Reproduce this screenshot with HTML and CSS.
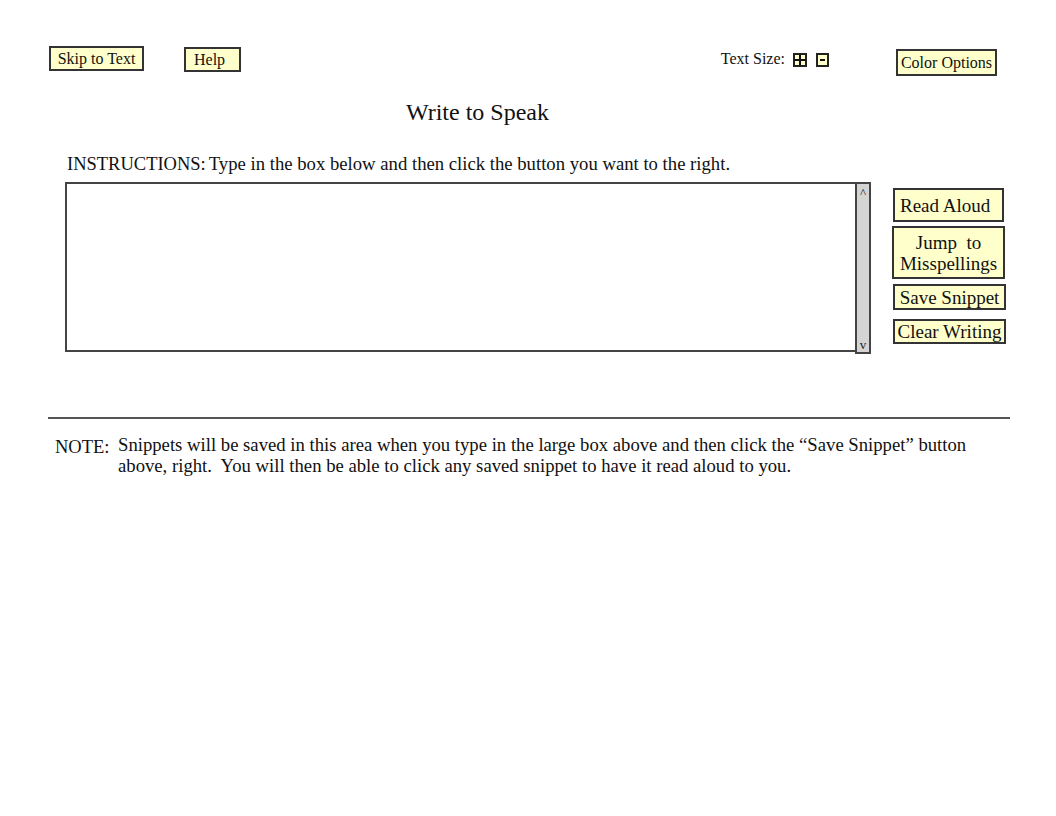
FILE: index.html
```html
<!DOCTYPE html>
<html lang="en">
<head>
<meta charset="utf-8">
<title>Write to Speak</title>
<link rel="stylesheet" href="styles.css">
</head>
<body>
<div class="page">
  <header class="topbar">
    <button class="btn btn-skip">Skip to Text</button>
    <button class="btn btn-help">Help</button>
    <div class="textsize">
      <span class="textsize-label">Text Size:</span>
      <span class="size-btn size-plus" aria-label="Increase text size">
        <svg width="14" height="14" viewBox="0 0 14 14"><rect x="1" y="1" width="12" height="12" fill="#ffffcc" stroke="#222" stroke-width="2"/><path d="M7 1.5V12.5M1.5 7H12.5" stroke="#111" stroke-width="2"/></svg>
      </span>
      <span class="size-btn size-minus" aria-label="Decrease text size">
        <svg width="13" height="14" viewBox="0 0 13 14"><rect x="1" y="1" width="11" height="12" fill="#ffffcc" stroke="#222" stroke-width="2"/><path d="M4 7H9" stroke="#111" stroke-width="2"/></svg>
      </span>
    </div>
    <button class="btn btn-color">Color Options</button>
  </header>

  <h1 class="title">Write to Speak</h1>

  <p class="instructions"><span class="instr-label">INSTRUCTIONS:</span>Type in the box below and then click the button you want to the right.</p>

  <section class="workarea">
    <div class="editor">
      <div class="textbox"></div>
      <div class="scrollbar"><span class="arrow-up">^</span><span class="arrow-down">v</span></div>
    </div>
    <div class="actions">
      <button class="btn act act-read">Read Aloud</button>
      <button class="btn act act-jump">Jump&nbsp; to<br>Misspellings</button>
      <button class="btn act act-save">Save Snippet</button>
      <button class="btn act act-clear">Clear Writing</button>
    </div>
  </section>

  <hr class="divider">

  <div class="note">
    <span class="note-label">NOTE:</span>
    <p class="note-text">Snippets will be saved in this area when you type in the large box above and then click the “Save Snippet” button above, right.&nbsp; You will then be able to click any saved snippet to have it read aloud to you.</p>
  </div>
</div>
</body>
</html>
```

FILE: styles.css
```css
html, body {
  margin: 0;
  padding: 0;
  background: #ffffff;
}

body {
  font-family: "Liberation Serif", "Times New Roman", serif;
  color: #111;
}

.page {
  width: 1056px;
  min-height: 816px;
}

.btn {
  font-family: "Liberation Serif", "Times New Roman", serif;
  background: #ffffcc;
  border: 2px solid #333;
  color: #111;
  padding: 0;
  margin: 0;
  cursor: pointer;
  box-sizing: border-box;
}

/* top bar */
.topbar {
  display: flex;
  align-items: flex-start;
  padding: 46px 59px 0 49px;
  height: 76px;
  box-sizing: border-box;
}

.btn-skip {
  width: 95px;
  height: 25px;
  font-size: 16px;
}

.btn-help {
  width: 57px;
  height: 25px;
  font-size: 16px;
  margin-top: 1px;
  margin-left: 40px;
  text-align: left;
  padding-left: 8px;
}

.textsize {
  margin-left: auto;
  display: flex;
  align-items: center;
  margin-top: 4px;
}

.textsize-label {
  font-size: 16px;
  margin-right: 8px;
}

.size-btn {
  display: flex;
  line-height: 0;
}

.size-plus {
  margin-top: 2px;
}

.size-minus {
  margin-left: 9px;
  margin-top: 2px;
}

.btn-color {
  width: 101px;
  height: 27px;
  font-size: 16px;
  margin-left: 67px;
  margin-top: 3px;
}

/* title */
.title {
  margin: 22px 0 0 406px;
  font-size: 24px;
  font-weight: normal;
  line-height: 28px;
}

/* instructions */
.instructions {
  margin: 27px 0 0 67px;
  font-size: 18.7px;
  line-height: 22px;
}

.instr-label {
  font-size: 18.5px;
  margin-right: 3px;
}

/* work area */
.workarea {
  display: flex;
  align-items: flex-start;
  padding-left: 65px;
  margin-top: 7px;
}

.editor {
  display: flex;
  align-items: flex-start;
}

.textbox {
  width: 790px;
  height: 170px;
  border: 2px solid #444;
  border-right: none;
  box-sizing: border-box;
  background: #fff;
}

.scrollbar {
  width: 16px;
  height: 172px;
  background: #d4d4d4;
  border: 2px solid #444;
  box-sizing: border-box;
  display: flex;
  flex-direction: column;
  justify-content: space-between;
  align-items: center;
  font-size: 13px;
  color: #222;
  line-height: 14px;
}

.arrow-up {
  margin-top: 2px;
}

.actions {
  display: flex;
  flex-direction: column;
  margin-left: 22px;
  margin-top: 6px;
}

.act {
  font-size: 19px;
  line-height: 21px;
  text-align: center;
}

.act-read {
  width: 111px;
  height: 34px;
  text-align: left;
  padding-left: 5px;
}

.act-jump {
  width: 113px;
  height: 53px;
  margin-top: 4px;
  margin-left: -1px;
}

.act-save {
  width: 113px;
  height: 26px;
  margin-top: 5px;
}

.act-clear {
  width: 113px;
  height: 25px;
  margin-top: 9px;
}

/* divider */
.divider {
  margin: 63px 46px 0 48px;
  border: none;
  border-top: 2px solid #555;
  height: 0;
}

/* note */
.note {
  display: flex;
  align-items: flex-start;
  margin: 15px 0 0 55px;
}

.note-label {
  font-size: 18.5px;
  line-height: 22px;
  width: 63px;
  flex-shrink: 0;
  margin-top: 2px;
}

.note-text {
  margin: 0;
  width: 870px;
  font-size: 18.7px;
  line-height: 21px;
}
```
